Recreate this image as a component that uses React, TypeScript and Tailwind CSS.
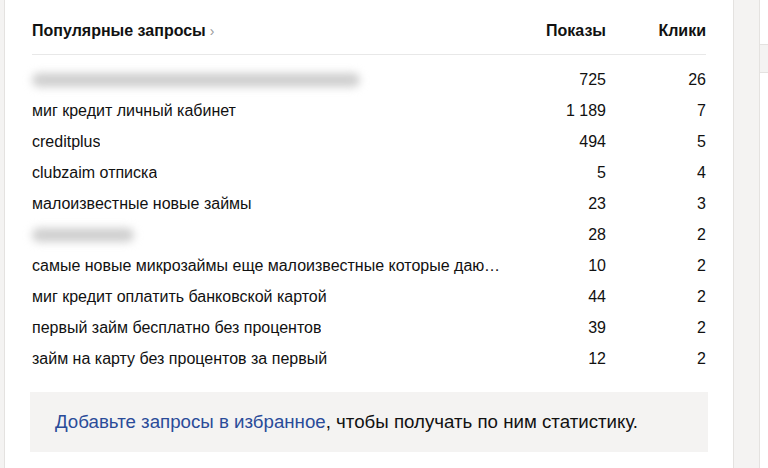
const ROWS: { q: string; shows: string; clicks: string; blur?: number }[] = [
  { q: "", shows: "725", clicks: "26", blur: 328 },
  { q: "миг кредит личный кабинет", shows: "1 189", clicks: "7" },
  { q: "creditplus", shows: "494", clicks: "5" },
  { q: "clubzaim отписка", shows: "5", clicks: "4" },
  { q: "малоизвестные новые займы", shows: "23", clicks: "3" },
  { q: "", shows: "28", clicks: "2", blur: 102 },
  { q: "самые новые микрозаймы еще малоизвестные которые дают без проверки", shows: "10", clicks: "2" },
  { q: "миг кредит оплатить банковской картой", shows: "44", clicks: "2" },
  { q: "первый займ бесплатно без процентов", shows: "39", clicks: "2" },
  { q: "займ на карту без процентов за первый", shows: "12", clicks: "2" },
];

export default function App() {
  return (
    <div
      className="flex h-[468px] w-[768px] overflow-hidden bg-[#f4f3f2] text-[#111]"
      style={{ fontFamily: '"Liberation Sans", Arial, sans-serif' }}
    >
      <div className="w-[5px] shrink-0 border-r border-[#e4e2e0]" />
      <div className="w-[728px] shrink-0 bg-white">
        <div className="mx-[27px] mt-[19px] flex h-[36px] items-start border-b border-[#e8e8e8] text-[16px] font-bold">
          <div className="flex flex-1 items-center">
            Популярные запросы
            <span className="ml-[4px] text-[14px] font-normal text-[#999]">›</span>
          </div>
          <div className="w-[100px] text-right">Показы</div>
          <div className="w-[100px] text-right">Клики</div>
        </div>
        <div className="mx-[27px] mt-[9px] flex flex-col text-[16px]">
          {ROWS.map((r, i) => (
            <div key={i} className="flex h-[31px] items-center">
              <div className="flex min-w-0 flex-1 items-center">
                {r.blur ? (
                  <div
                    className="h-[14px] rounded-full bg-[#cfcfcf] blur-[4px]"
                    style={{ width: r.blur }}
                  />
                ) : (
                  <span className="truncate">{r.q}</span>
                )}
              </div>
              <div className="w-[100px] shrink-0 text-right">{r.shows}</div>
              <div className="w-[100px] shrink-0 text-right">{r.clicks}</div>
            </div>
          ))}
        </div>
        <div className="mx-[25px] mt-[18px] flex h-[60px] items-center bg-[#f4f3f2] px-[25px] text-[18.7px]">
          <span>
            <span className="text-[#2a4b99]">Добавьте запросы в избранное</span>, чтобы получать по ним статистику.
          </span>
        </div>
      </div>
      <div className="w-[27px] shrink-0 border-x border-[#e4e2e0]" />
      <div className="flex flex-1 flex-col">
        <div className="h-[45px] border-b border-[#e4e2e0] bg-white" />
        <div className="h-[27px]" />
        <div className="flex-1 border-t border-[#e4e2e0] bg-white" />
      </div>
    </div>
  );
}
